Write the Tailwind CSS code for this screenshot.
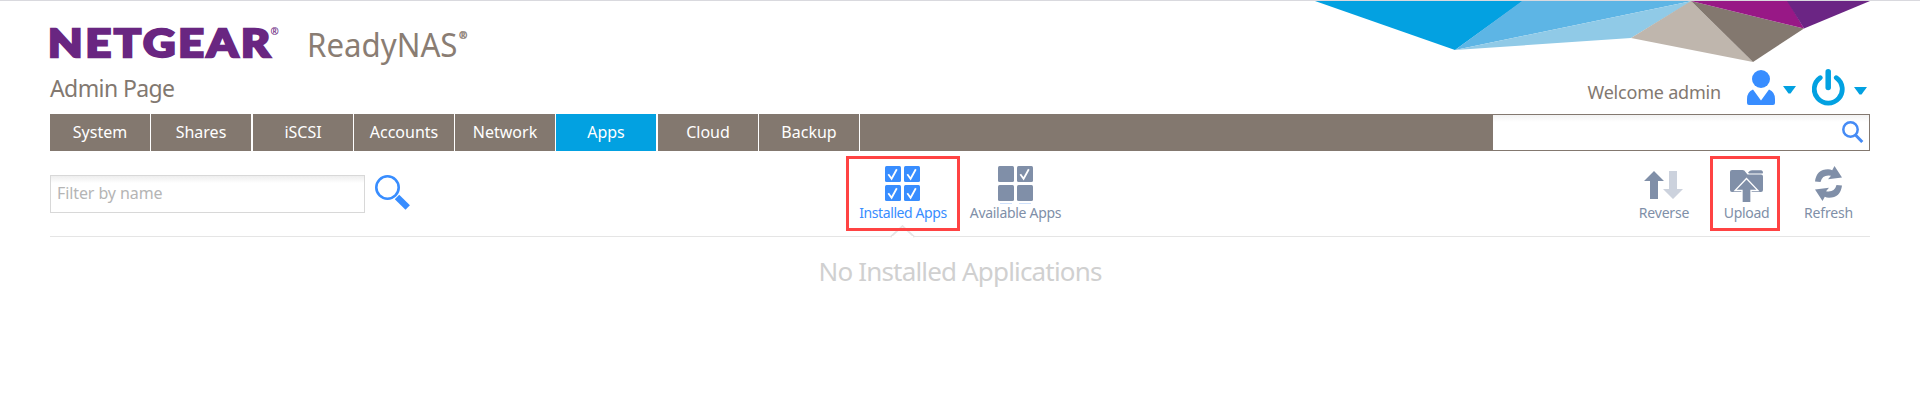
<!DOCTYPE html>
<html lang="en">
<head>
<meta charset="utf-8">
<title>ReadyNAS Admin Page</title>
<script src="https://cdn.jsdelivr.net/npm/@tailwindcss/browser@4"></script>
</head>
<body class="h-[417px] overflow-hidden border-t border-[#d9d9de] bg-white font-['Noto_Sans',sans-serif] text-[#827870]">
<div class="relative mx-[50px] flex flex-col">
  <svg class="absolute top-0 right-0" width="555" height="62" viewBox="1315 1 555 62">
    <path fill="#03a1e1" d="M1315 1H1523L1455 50Z"/>
    <path fill="#5db5e5" d="M1522 1H1692L1455 50Z"/>
    <path fill="#90cae7" d="M1692 1 1631 38 1455 50Z"/>
    <path fill="#bfb6ad" d="M1691 1 1753 62 1631 38Z"/>
    <path fill="#83786f" d="M1691 1 1804 28.500 1753 62Z"/>
    <path fill="#981886" d="M1691 1H1788L1804 28.500Z"/>
    <path fill="#6b2584" d="M1787 1H1870L1804 28.500Z"/>
  </svg>
  <header class="flex h-[113px] justify-between">
    <div>
      <svg class="block h-[72px] w-[420px] overflow-visible" viewBox="50 1 420 72">
        <text class="tracking-[2.5px]" x="48" y="56.500" font-family="Lato" font-weight="900" font-size="38.500" fill="#692681" stroke="#692681" stroke-width="2.400" textLength="225" lengthAdjust="spacingAndGlyphs">NETGEAR</text>
        <text x="270.500" y="34.500" font-family="Noto Sans" font-weight="700" font-size="10" fill="#692681">®</text>
        <text x="307" y="57" font-family="Noto Sans" font-size="33.500" fill="#8a7d73" textLength="150.500" lengthAdjust="spacingAndGlyphs">ReadyNAS</text>
        <text x="459" y="38.500" font-family="Noto Sans" font-weight="700" font-size="10" fill="#8a7d73" stroke="#8a7d73" stroke-width=".4">®</text>
      </svg>
      <h1 class="-mt-px h-8 text-[23px] leading-8 tracking-[-0.6px]">Admin Page</h1>
    </div>
    <div class="mr-[3px] flex items-start pt-[68px]">
      <span class="mt-[11px] mr-[26px] text-[18px] leading-6 tracking-[-0.2px]">Welcome admin</span>
      <svg class="mt-px h-[35px] w-7" viewBox="0 0 28 35" fill="#388dff"><circle cx="14" cy="9" r="9"/><path d="M6 19.500 14 30.500 22 19.500Q28 22 28 29V33Q28 35 26 35H2Q0 35 0 33V29Q0 22 6 19.500Z"/></svg>
      <svg class="mt-[17px] ml-2 h-2 w-[13px]" viewBox="0 0 13 8"><path fill="#02a1e1" d="M0 0H13L7.500 7.500H5.500Z"/></svg>
      <svg class="ml-4 h-[37px] w-[33px]" viewBox="0 0 33 37" fill="none" stroke="#02a1e1" stroke-linecap="round"><path stroke-width="4.800" d="M8.200 8.700A14 14 0 1 0 24.300 8.700"/><path stroke-width="5.500" d="M16.200 2.800V18.500"/></svg>
      <svg class="mt-[18px] ml-[9px] h-2 w-[13px]" viewBox="0 0 13 8"><path fill="#02a1e1" d="M0 0H13L7.500 7.500H5.500Z"/></svg>
    </div>
  </header>
  <nav class="flex h-[37px] text-center text-[16px] leading-[36px] text-white">
    <a class="mr-px w-[100px] bg-[#83786f]">System</a>
    <a class="mr-0.5 w-[100px] bg-[#83786f]">Shares</a>
    <a class="mr-px w-[100px] bg-[#83786f]">iSCSI</a>
    <a class="mr-px w-[100px] bg-[#83786f]">Accounts</a>
    <a class="mr-px w-[100px] bg-[#83786f]">Network</a>
    <a class="mr-0.5 w-[100px] bg-[#02a1e1]">Apps</a>
    <a class="mr-px w-[100px] bg-[#83786f]">Cloud</a>
    <a class="mr-px w-[100px] bg-[#83786f]">Backup</a>
    <div class="flex-1 bg-[#83786f]"></div>
    <div class="flex w-[378px] justify-end border border-[#83786f] bg-linear-to-b from-[#f2f2f2] to-white to-20% pt-[6px] pr-[5px]">
      <svg class="h-[22px] w-[22px]" viewBox="0 0 22 22" fill="none" stroke="#458bf5"><circle cx="8.500" cy="8.500" r="7.200" stroke-width="2.500"/><path stroke-width="3" d="m13.500 14 6.800 7"/></svg>
    </div>
  </nav>
  <section class="grid h-[86px] grid-cols-[796px_1fr_auto] border-b border-[#e5e5e5]">
    <div class="flex gap-[10px] pt-6">
      <div class="h-[38px] w-[315px] border border-[#d8d8d8] bg-linear-to-b from-[#eeeeee] to-white to-20% pl-[6px] text-[16px] leading-[34px] tracking-[-0.100px] text-[#b5b5b5]">Filter by name</div>
      <svg class="h-[35px] w-[35px]" viewBox="0 0 35 35" fill="none" stroke="#388dff"><circle cx="12.500" cy="12.500" r="11.200" stroke-width="2.600"/><path stroke-width="6.300" d="m22 22 10.700 10.500"/></svg>
    </div>
    <div class="flex text-[14px] leading-5">
      <div class="relative mt-[5px] flex h-[75px] w-[114px] flex-col items-center border-[3px] border-[#ff4343] pt-[7px] text-[#388dff]">
        <svg class="mr-px h-[35px] w-[35px] shrink-0" viewBox="0 0 35 35"><g fill="#388dff"><rect width="16" height="16" rx="1.500"/><rect x="19" width="16" height="16" rx="1.500"/><rect y="19" width="16" height="16" rx="1.500"/><rect x="19" y="19" width="16" height="16" rx="1.500"/></g><path fill="none" stroke="#fff" stroke-width="1.800" d="m3.300 8.300 3.300 4.500 5.200-9.600M22.300 8.300l3.300 4.500 5.200-9.600M3.300 27.300l3.300 4.500 5.200-9.600M22.300 27.300l3.300 4.500 5.200-9.600"/></svg>
        <span class="mt-0.5 whitespace-nowrap tracking-[-0.400px]">Installed Apps</span>
        <svg class="absolute top-[66px] left-[41px] -z-10 h-[13px] w-[25px]" viewBox="0 0 25 13"><path fill="none" stroke="#e5e5e5" stroke-width="1.700" d="M.5 12 12.500 1 24.500 12"/></svg>
        <div class="absolute top-[77px] left-[43px] h-px w-[21px] bg-white"></div>
      </div>
      <div class="ml-[7px] flex w-[97px] flex-col items-center pt-[15px] text-[#808fa8]">
        <svg class="h-[38px] w-[35px] shrink-0" viewBox="0 0 35 38"><g fill="#808fa8"><rect width="16" height="16" rx="1.500"/><rect x="19" width="16" height="16" rx="1.500"/><rect y="19" width="16" height="16" rx="1.500"/><rect x="19" y="19" width="16" height="16" rx="1.500"/></g><path fill="none" stroke="#fff" stroke-width="1.800" d="m22.300 8.300 3.300 4.500 5.200-9.600"/><path stroke="#cfe1fb" d="M2 37.500H14M21 37.500H33"/></svg>
        <span class="-mt-px whitespace-nowrap tracking-[-0.300px]">Available Apps</span>
      </div>
    </div>
    <div class="mr-[9px] flex text-[14px] leading-5 text-[#808fa8]">
      <div class="flex w-[74px] flex-col items-center pt-[20px]">
        <svg class="mr-px h-7 w-[39px] shrink-0" viewBox="0 0 39 28"><path fill="#808fa8" d="M10 0 20 10H14V28H6V10H0Z"/><path fill="#ccd2dd" d="M25 0H33V18H39L29 28 19 18H25Z"/></svg>
        <span class="mt-1 tracking-[-0.200px]">Reverse</span>
      </div>
      <div class="ml-[9px] mt-[5px] flex h-[75px] w-[70px] flex-col items-center border-[3px] border-[#ff4343] pt-[11px]">
        <svg class="ml-[3px] h-8 w-[33px] shrink-0" viewBox="0 0 33 32"><path fill="#808fa8" d="M0 2Q0 0 2 0H12.500Q14.500 0 15.500 2L17.500 4.500H31Q33 4.500 33 6.500V20Q33 22 31 22H2Q0 22 0 20ZM18 2.500Q20 .2 22 .2H31Q33 .2 33 3.300Q32 3.500 30 3.500H19Z"/><path fill="#808fa8" stroke="#fff" stroke-width="1.300" d="M16.500 8.500 28 20.500H21V33H12V20.500H5Z"/></svg>
        <span class="mt-px ml-[3px] tracking-[-0.300px]">Upload</span>
      </div>
      <div class="ml-[15px] flex w-[66px] flex-col items-center pt-[15px]">
        <svg class="ml-0.5 h-[35px] w-7 shrink-0" viewBox="0 0 28 35" fill="#808fa8"><path d="M0 15.500Q1.500 3.300 13 3.300Q15.500 3.300 17.200 4.300L19.500 0 27 11.500 13 13.200 16 9.800Q7.500 8.300 5.500 16Z"/><path transform="rotate(180 13.500 17.500)" d="M0 15.500Q1.500 3.300 13 3.300Q15.500 3.300 17.200 4.300L19.500 0 27 11.500 13 13.200 16 9.800Q7.500 8.300 5.500 16Z"/></svg>
        <span class="mt-0.5 ml-px tracking-[-0.200px]">Refresh</span>
      </div>
    </div>
  </section>
  <p class="pt-[15px] text-center text-[26px] leading-[38px] tracking-[-0.830px] text-[#d0d0d0]">No Installed Applications</p>
</div>
</body>
</html>
